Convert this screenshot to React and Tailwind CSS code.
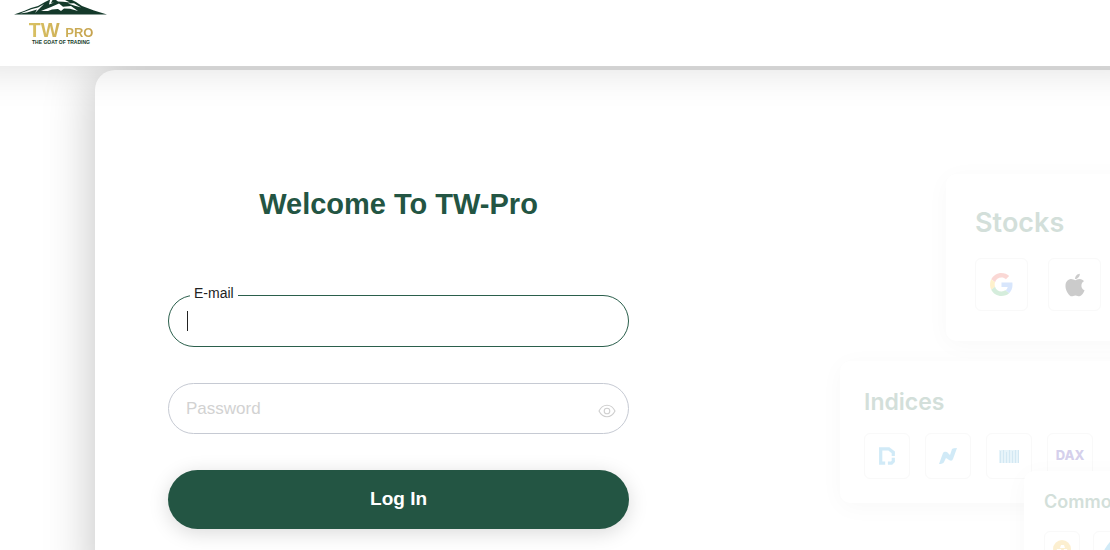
import { useState } from "react";

// Mountain logo with the wordmark below it
const Logo = () => (
  <a href="#home" className="flex w-[94px] flex-col items-center text-[#143a27]">
    <svg viewBox="0 0 94 15" className="h-[15px] w-[94px]" aria-hidden="true">
      <path
        fill="#14392a"
        d="M0 14.6 L10 11 L17 8 L24 6 L31 2 L35 0 L58 0 L62 2 L68 6 L80 10.500 L93 14.6 Z"
      />
      <g fill="#fff">
        <path d="M6 13.6 L18 9 L24 7.4 L30 4 L25 9 L21 13 L23 9.4 L13 12.4 Z" />
        <path d="M27 11 L37 7 L45 3.5 L49 6.800 L57 6 L64 11 L56 8.800 L50 8.6 L47 11 L44 9 L38 9.6 L34 11 Z" />
        <path d="M36 0 L38.500 0 L37 3 L40 2.400 L35 4.500 Z" />
        <path d="M42 0 L51 0 L56 2.6 L49 1.800 L44 1.600 Z" />
        <path d="M54 3.6 L60 3.2 L67 7.5 L60 5.4 Z" />
      </g>
    </svg>
    <span className="mt-[5px] bg-gradient-to-r from-[#d9c163] to-[#c5a24e] bg-clip-text text-[20px] leading-[20px] font-bold text-transparent">
      TW <span className="text-[13px]">PRO</span>
    </span>
    <span className="-mt-1 text-[5px] leading-[6px] font-bold whitespace-nowrap">
      THE GOAT OF TRADING
    </span>
  </a>
);

const EyeIcon = () => (
  <svg
    viewBox="0 0 18 14"
    className="h-[14px] w-[18px]"
    fill="none"
    stroke="currentColor"
    strokeWidth="1.1"
    aria-hidden="true"
  >
    <path d="M1 7 C3 3 5.8 1.3 9 1.3 S15 3 17 7 C15 11 12.2 12.7 9 12.7 S3 11 1 7 Z" />
    <circle cx="9" cy="7" r="2.8" />
  </svg>
);

const GoogleIcon = () => (
  <svg viewBox="0 0 48 48" className="size-[23px]" aria-hidden="true">
    <path fill="#EA4335" d="M24 9.5c3.5 0 6.700 1.200 9.200 3.600l6.900-6.900C35.900 2.400 30.500 0 24 0 14.600 0 6.500 5.400 2.600 13.200l8 6.200C12.400 13.700 17.700 9.500 24 9.500z" />
    <path fill="#4285F4" d="M47 24.500c0-1.600-.2-3.100-.4-4.500H24v9h12.900c-.6 3-2.200 5.500-4.700 7.200l7.700 6C44.400 38 47 31.800 47 24.500z" />
    <path fill="#FBBC05" d="M10.500 28.600c-.5-1.500-.8-3-.8-4.600s.3-3.100.8-4.600l-8-6.200C.9 16.500 0 20.100 0 24s.9 7.500 2.600 10.800l7.900-6.200z" />
    <path fill="#34A853" d="M24 48c6.500 0 11.900-2.100 15.900-5.800l-7.700-6c-2.200 1.500-4.900 2.300-8.200 2.300-6.300 0-11.600-4.200-13.500-9.900l-8 6.200C6.500 42.600 14.600 48 24 48z" />
  </svg>
);

const AppleIcon = () => (
  <svg viewBox="0 0 384 512" className="h-[26px] w-[20px]" fill="#000" aria-hidden="true">
    <path d="M318.700 268.700c-.2-36.700 16.400-64.400 50-84.800-18.800-26.900-47.200-41.700-84.700-44.600-35.500-2.800-74.300 20.700-88.500 20.700-15 0-49.400-19.700-76.400-19.700C63.300 141.200 4 184.800 4 273.500q0 39.300 14.400 81.200c12.800 36.700 59 126.700 107.200 125.200 25.200-.6 43-17.900 75.800-17.900 31.800 0 48.300 17.900 76.400 17.900 48.600-.7 90.400-82.500 102.600-119.300-65.200-30.700-61.700-90-61.700-91.900zm-56.600-164.200c27.300-32.400 24.800-61.900 24-72.500-24.100 1.400-52 16.400-67.900 34.900-17.500 19.800-27.800 44.300-25.600 71.900 26.100 2 49.900-11.400 69.500-34.300z" />
  </svg>
);

const DowIcon = () => (
  <svg viewBox="0 0 20 22" className="h-[20px] w-[18px]" fill="none" stroke="#1d9bd8" strokeWidth="3.6" aria-hidden="true">
    <path d="M8 19H3V3h9l5 4v4" />
    <path d="M17 13v4l-2 2h-4" />
  </svg>
);

const NasdaqIcon = () => (
  <svg viewBox="0 0 20 18" className="h-[18px] w-[20px]" fill="#1d9bd8" aria-hidden="true">
    <path d="M1 17 L5 6 Q6 4 9 5 L12 8 L14 2 Q15 1 19 1 L15 12 Q14 15 11 13 L8 11 L6 15 Q5 17 1 17 Z" />
  </svg>
);

const BarsIcon = () => (
  <svg viewBox="0 0 20 13" className="h-[13px] w-[20px]" aria-hidden="true">
    <rect width="20" height="13" fill="#8ccbe8" />
    <path stroke="#2a8fc4" d="M1.500 1v12M4.500 0v13M7.500 2v11M10.500 0v13M13.500 1v12M16.500 0v13M19.500 0v13" />
  </svg>
);

const CoinIcon = () => (
  <svg viewBox="0 0 18 18" className="size-[18px]" aria-hidden="true">
    <circle cx="9" cy="9" r="9" fill="#f2b21b" />
    <path fill="#fff" d="M7 8l1-3h3l1 3zM3 12l1-3h4l1 3zM10 12l1-3h3l1 3z" />
  </svg>
);

const DropIcon = () => (
  <svg viewBox="0 0 14 18" className="h-[18px] w-[14px]" fill="#1d9bd8" aria-hidden="true">
    <path d="M7 0C9 4 14 8 14 12a7 6 0 0 1-14 0C0 8 5 4 7 0z" />
  </svg>
);

const App = () => {
  const [email, setEmail] = useState("");
  const [password, setPassword] = useState("");
  const [showPassword, setShowPassword] = useState(false);

  return (
    <div className="min-h-screen overflow-hidden bg-white font-['Liberation_Sans',Arial,sans-serif]">
      {/* Header is wider than the window so its shadow stays even at the sides */}
      <header className="relative z-10 -mx-10 h-[66px] bg-white px-[54px] shadow-[0_4px_40px_rgba(0,0,0,0.12)]">
        <Logo />
      </header>

      <main className="-mr-[50px] pt-1 pl-[95px]">
        <div className="flex rounded-tl-[20px] bg-white shadow-[0_0_50px_rgba(0,0,0,0.25)]">
          {/* Login form */}
          <form
            onSubmit={(e) => e.preventDefault()}
            className="flex w-[57%] flex-col px-[73px] pt-[116px]"
          >
            <h1 className="text-center text-[29px] leading-[36px] font-bold whitespace-nowrap text-[#235543]">
              Welcome To TW-Pro
            </h1>

            <div className="relative mt-[73px]">
              <label
                htmlFor="email"
                className="absolute -top-[10px] left-[22px] bg-white px-1 text-[14px] leading-[16px] text-[#222]"
              >
                E-mail
              </label>
              <input
                id="email"
                type="email"
                value={email}
                onChange={(e) => setEmail(e.target.value)}
                className="peer block h-[52px] w-full rounded-full border border-[#2b5f4c] px-[18px] text-[17px] caret-transparent outline-none focus:caret-[#222]"
              />
              <span className="pointer-events-none absolute top-4 left-[19px] h-5 w-px bg-[#222] peer-focus:hidden" />
            </div>

            <div className="relative mt-9">
              <input
                id="password"
                aria-label="Password"
                type={showPassword ? "text" : "password"}
                placeholder="Password"
                value={password}
                onChange={(e) => setPassword(e.target.value)}
                className="block h-[51px] w-full rounded-full border border-[#c6cad3] pr-12 pl-[17px] text-[17px] outline-none placeholder:text-[#d2d2d2]"
              />
              <button
                type="button"
                aria-label="Show password"
                onClick={() => setShowPassword(!showPassword)}
                className="absolute top-[21px] right-[13px] text-[#cfcfcf]"
              >
                <EyeIcon />
              </button>
            </div>

            <button
              type="submit"
              className="mt-9 h-[59px] rounded-full bg-[#235543] text-[19px] font-bold text-white shadow-[0_4px_20px_rgba(0,0,0,0.15)]"
            >
              Log In
            </button>
          </form>

          {/* Market cards */}
          <div className="flex w-[43%] flex-col pt-[104px] font-['Inter',sans-serif] font-semibold text-[#d3dfda]">
            <section className="ml-[244px] h-[167px] w-[420px] rounded-[10px] bg-white px-[29px] pt-[33px] shadow-[0_4px_24px_rgba(0,0,0,0.03)]">
              <h2 className="text-[27px] leading-[32px]">Stocks</h2>
              <div className="mt-[19px] flex gap-[20px]">
                <div className="flex size-[53px] items-center justify-center rounded-md border border-[#f9f9f9]">
                  <span className="opacity-20"><GoogleIcon /></span>
                </div>
                <div className="flex size-[53px] items-center justify-center rounded-md border border-[#f9f9f9]">
                  <span className="opacity-20"><AppleIcon /></span>
                </div>
              </div>
            </section>

            <section className="mt-5 ml-[138px] h-[142px] w-[420px] rounded-[10px] bg-white px-[24px] pt-[28px] shadow-[0_4px_24px_rgba(0,0,0,0.03)]">
              <h2 className="text-[23px] leading-[26px]">Indices</h2>
              <div className="mt-[18px] flex gap-[15px]">
                <div className="flex size-[46px] items-center justify-center rounded-md border border-[#f9f9f9]">
                  <span className="opacity-20"><DowIcon /></span>
                </div>
                <div className="flex size-[46px] items-center justify-center rounded-md border border-[#f9f9f9]">
                  <span className="opacity-20"><NasdaqIcon /></span>
                </div>
                <div className="flex size-[46px] items-center justify-center rounded-md border border-[#f9f9f9]">
                  <span className="opacity-20"><BarsIcon /></span>
                </div>
                <div className="flex size-[46px] items-center justify-center rounded-md border border-[#f9f9f9]">
                  <span className="text-[13px] font-extrabold text-[#d5d0ec]">DAX</span>
                </div>
              </div>
            </section>

            <section className="relative -mt-8 ml-[322px] h-[120px] w-[320px] rounded-[10px] bg-white px-[20px] pt-[20px] shadow-[0_4px_24px_rgba(0,0,0,0.03)]">
              <h2 className="text-[18px] leading-[22px]">Commodities</h2>
              <div className="mt-[18px] flex gap-[13px]">
                <div className="flex size-[36px] items-center justify-center rounded-md border border-[#f9f9f9]">
                  <span className="opacity-20"><CoinIcon /></span>
                </div>
                <div className="flex size-[36px] items-center justify-center rounded-md border border-[#f9f9f9]">
                  <span className="opacity-20"><DropIcon /></span>
                </div>
              </div>
            </section>
          </div>
        </div>
      </main>
    </div>
  );
};

export default App;
